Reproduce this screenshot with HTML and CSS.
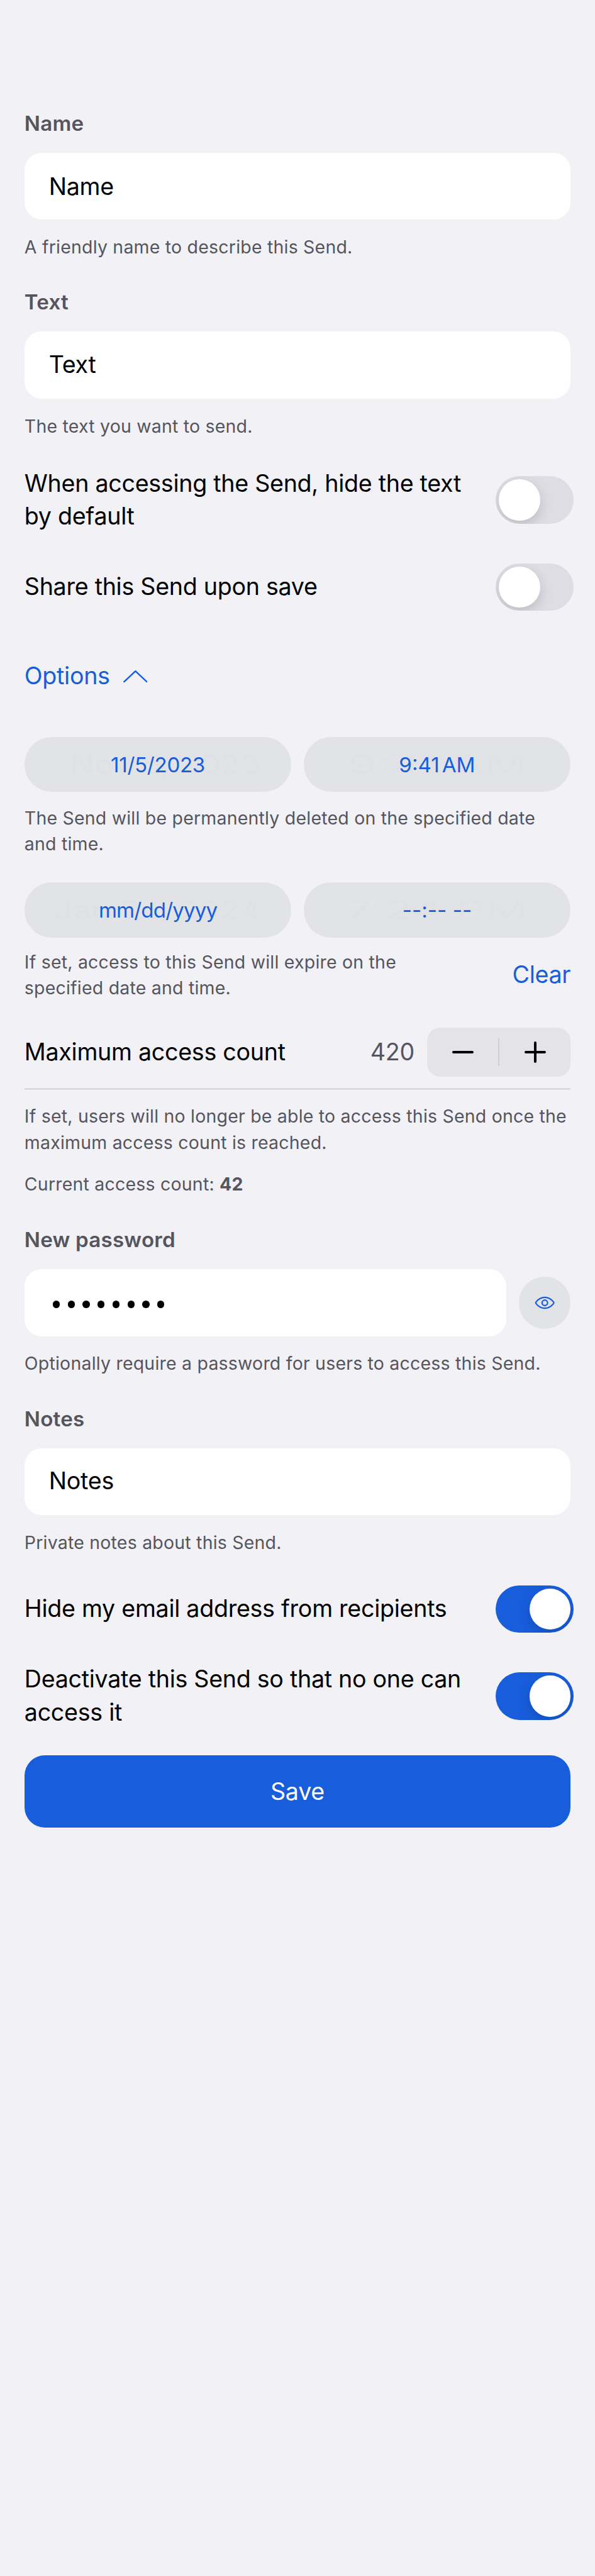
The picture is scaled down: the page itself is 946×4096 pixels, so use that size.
FILE: index.html
```html
<!DOCTYPE html>
<html lang="en">
<head>
<meta charset="utf-8">
<title>Send</title>
<link rel="stylesheet" href="styles.css">
</head>
<body>
<main class="form">
  <section class="field">
    <h2 class="label">Name</h2>
    <div class="input input-name">Name</div>
    <p class="help">A friendly name to describe this Send.</p>
  </section>
  <section class="field">
    <h2 class="label">Text</h2>
    <div class="input">Text</div>
    <p class="help">The text you want to send.</p>
  </section>

  <div class="toggle-row toggle-first">
    <span class="body">When accessing the Send, hide the text<br>by default</span>
    <span class="switch"><span class="thumb"></span></span>
  </div>
  <div class="toggle-row toggle-share">
    <span class="body">Share this Send upon save</span>
    <span class="switch"><span class="thumb"></span></span>
  </div>

  <div class="options">
    <span class="body">Options</span>
    <svg class="chevron" viewBox="0 0 48 24"><path d="M1.5 22.5 24 1.5 46.5 22.5"/></svg>
  </div>

  <div class="pills pills-deletion">
    <div class="pill"><span class="ghost ghost-short">Nov 5, 2023</span><span class="value">11/5/2023</span></div>
    <div class="pill"><span class="ghost ghost-time">9:41 AM</span><span class="value value-time">9:41<span class="thin"></span>AM</span></div>
  </div>
  <p class="help help-deletion">The Send will be permanently deleted on the specified date<br>and time.</p>

  <div class="pills pills-expiry">
    <div class="pill"><span class="ghost">Jan 24, 2024</span><span class="value value-placeholder">mm/dd/yyyy</span></div>
    <div class="pill"><span class="ghost ghost-time">7:24 PM</span><span class="value value-time">--:-- --</span></div>
  </div>
  <div class="expiry-row">
    <p class="help">If set, access to this Send will expire on the<br>specified date and time.</p>
    <span class="body clear">Clear</span>
  </div>

  <div class="count-row">
    <span class="body">Maximum access count</span>
    <span class="body count">420</span>
    <div class="stepper">
      <span class="step"><svg class="step-icon" viewBox="0 0 42 42"><path d="M2.5 21H39.5"/></svg></span>
      <span class="step-divider"></span>
      <span class="step"><svg class="step-icon" viewBox="0 0 42 42"><path d="M2.5 21H39.5M21 2.5V39.5"/></svg></span>
    </div>
  </div>
  <p class="help help-limit">If set, users will no longer be able to access this Send once the<br>maximum access count is reached.</p>
  <p class="help help-current">Current access count: <b>42</b></p>

  <section class="field field-password">
    <h2 class="label">New password</h2>
    <div class="password-row">
      <div class="input dots"><i></i><i></i><i></i><i></i><i></i><i></i><i></i><i></i></div>
      <span class="reveal">
        <svg class="eye" viewBox="0 0 40 26"><path d="M2.900 11.300C7.300 5.600 13 2.300 20 2.300S32.700 5.600 37.100 11.300C37.900 12.400 37.900 13.600 37.100 14.700C32.700 20.400 27 23.700 20 23.700S7.300 20.400 2.900 14.700C2.100 13.600 2.100 12.400 2.900 11.300Z"/><circle cx="20" cy="13" r="5.400"/></svg>
      </span>
    </div>
    <p class="help">Optionally require a password for users to access this Send.</p>
  </section>
  <section class="field">
    <h2 class="label">Notes</h2>
    <div class="input">Notes</div>
    <p class="help">Private notes about this Send.</p>
  </section>

  <div class="toggle-row toggle-email">
    <span class="body">Hide my email address from recipients</span>
    <span class="switch on"><span class="thumb"></span></span>
  </div>
  <div class="toggle-row toggle-deactivate">
    <span class="body">Deactivate this Send so that no one can<br>access it</span>
    <span class="switch on"><span class="thumb"></span></span>
  </div>

  <div class="save">Save</div>
</main>
</body>
</html>
```

FILE: styles.css
```css
/* 1u is one device pixel of a 1170 x 5064 phone screen */
:root { --u: calc(4096px / 5064); }
* { box-sizing: border-box; }
body {
  margin: 0;
  background: #f2f1f6;
  font-family: Inter, "Liberation Sans", sans-serif;
  color: #000;
}
.form {
  display: flex;
  flex-direction: column;
  width: 946px;
  height: 4096px;
  padding: calc(216 * var(--u)) calc(48 * var(--u)) 0;
}
.field { display: flex; flex-direction: column; height: calc(352 * var(--u)); flex: none; }
.label {
  margin: 0;
  height: calc(84 * var(--u));
  font-size: calc(41 * var(--u));
  line-height: calc(54 * var(--u));
  font-weight: 600;
  letter-spacing: calc(.25 * var(--u));
  color: #55555e;
}
.input {
  display: flex;
  align-items: center;
  flex: none;
  height: calc(132 * var(--u));
  padding: 0 0 calc(3 * var(--u)) calc(48 * var(--u));
  border-radius: calc(34 * var(--u));
  background: #fff;
  font-size: calc(46.5 * var(--u));
  letter-spacing: calc(-.3 * var(--u));
}
.input-name { padding-top: calc(4 * var(--u)); }
.help {
  margin: 0;
  font-size: calc(35.2 * var(--u));
  line-height: calc(51 * var(--u));
  letter-spacing: calc(.27 * var(--u));
  color: #55555e;
  white-space: nowrap;
}
.field .help { margin-top: calc(28 * var(--u)); }
.body {
  font-size: calc(46.5 * var(--u));
  line-height: calc(65 * var(--u));
  letter-spacing: calc(-.35 * var(--u));
  white-space: nowrap;
}

.toggle-row {
  display: flex;
  align-items: center;
  justify-content: space-between;
  flex: none;
  height: calc(130 * var(--u));
  margin-right: calc(-6 * var(--u));
}
.toggle-first { margin-top: calc(-2 * var(--u)); }
.toggle-share { margin-top: calc(41 * var(--u)); }
.toggle-deactivate { margin-top: calc(41 * var(--u)); }
.switch {
  display: flex;
  width: calc(153 * var(--u));
  height: calc(93 * var(--u));
  padding: calc(6 * var(--u));
  border-radius: calc(47 * var(--u));
  background: #dedde3;
  overflow: hidden;
}
.switch.on { justify-content: flex-end; background: #175ddc; }
.thumb {
  width: calc(81 * var(--u));
  height: calc(81 * var(--u));
  border-radius: 50%;
  background: #fff;
  box-shadow: 0 calc(9 * var(--u)) calc(24 * var(--u)) rgba(0, 0, 0, .15);
}

.options {
  display: flex;
  align-items: center;
  gap: calc(26 * var(--u));
  height: calc(65 * var(--u));
  margin-top: calc(78 * var(--u));
  color: #175ddc;
}
.chevron { width: calc(48 * var(--u)); height: calc(24 * var(--u)); }
.chevron path { fill: none; stroke: #175ddc; stroke-width: 3; stroke-linecap: round; stroke-linejoin: round; }

.pills { display: flex; gap: calc(24 * var(--u)); height: calc(108 * var(--u)); flex: none; }
.pills-deletion { margin-top: calc(87 * var(--u)); }
.pills-expiry { margin-top: calc(51 * var(--u)); }
.pill {
  display: grid;
  place-items: center;
  flex: 1 1 0;
  border-radius: calc(54 * var(--u));
  background: #e2e3e7;
  color: #175ddc;
  font-size: calc(41 * var(--u));
}
.pill > span { grid-area: 1 / 1; white-space: nowrap; }
.value { z-index: 1; letter-spacing: calc(-.4 * var(--u)); }
.value-placeholder { letter-spacing: calc(-1.1 * var(--u)); }
.value-time { letter-spacing: 0; }
/* stretched system picker text that shows faintly through the pill */
.ghost { color: #e0e1e5; font-size: calc(50 * var(--u)); transform: scaleX(1.3); }
.ghost-short { transform: translateX(calc(15 * var(--u))) scaleX(1.3); }
.ghost-time { transform: scaleX(1.85); }
.thin { display: inline-block; width: calc(5 * var(--u)); }
.help-deletion { margin-top: calc(25 * var(--u)); }

.expiry-row {
  display: flex;
  align-items: center;
  justify-content: space-between;
  flex: none;
  height: calc(102 * var(--u));
  margin-top: calc(23 * var(--u));
}
.clear { color: #175ddc; }

.count-row {
  display: flex;
  align-items: center;
  flex: none;
  height: calc(145 * var(--u));
  margin-top: calc(29 * var(--u));
  border-bottom: 1px solid #bbbac0;
}
.count { margin-left: auto; color: #55555e; }
.stepper {
  display: flex;
  align-items: center;
  width: calc(282 * var(--u));
  height: calc(96 * var(--u));
  margin-left: calc(25 * var(--u));
  border-radius: calc(26 * var(--u));
  background: #e4e3e8;
}
.step { display: flex; flex: 1; justify-content: center; }
.step-icon { width: calc(42 * var(--u)); height: calc(42 * var(--u)); }
.step-icon path { fill: none; stroke: #000; stroke-width: 5; stroke-linecap: round; }
.step-divider { width: calc(3 * var(--u)); height: calc(54 * var(--u)); background: #d0cfd5; }
.help-limit { margin-top: calc(27 * var(--u)); }
.help-current { margin-top: calc(31 * var(--u)); }

.field-password { margin-top: calc(58 * var(--u)); }
.password-row { display: flex; align-items: center; gap: calc(24 * var(--u)); height: calc(132 * var(--u)); flex: none; }
.dots { flex: 1; gap: calc(15.3 * var(--u)); padding: calc(7 * var(--u)) 0 0 calc(56 * var(--u)); }
.dots i { width: calc(14 * var(--u)); height: calc(14 * var(--u)); border-radius: 50%; background: #000; }
.reveal {
  display: flex;
  align-items: center;
  justify-content: center;
  width: calc(102 * var(--u));
  height: calc(102 * var(--u));
  border-radius: 50%;
  background: #e2e3e7;
}
.eye { width: calc(40 * var(--u)); height: calc(26 * var(--u)); }
.eye path, .eye circle { fill: none; stroke: #175ddc; stroke-width: 2.7; stroke-linejoin: round; }

.toggle-email { margin-top: calc(-16.5 * var(--u)); }
.save {
  display: flex;
  align-items: center;
  justify-content: center;
  flex: none;
  height: calc(142 * var(--u));
  margin-top: calc(51.5 * var(--u));
  border-radius: calc(40 * var(--u));
  background: #175ddc;
  color: #fff;
  font-size: calc(46.5 * var(--u));
  letter-spacing: calc(-.3 * var(--u));
}
```
